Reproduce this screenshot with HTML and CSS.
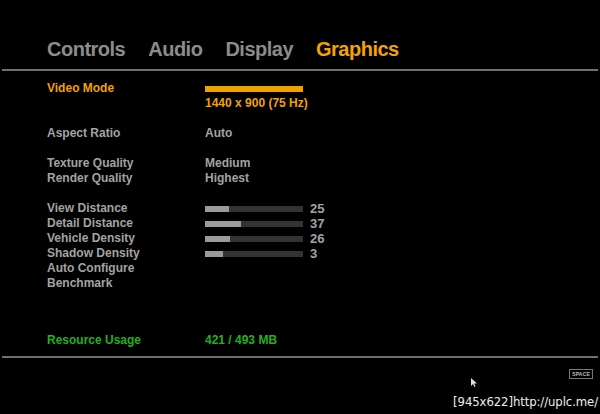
FILE: index.html
```html
<!DOCTYPE html>
<html lang="en">
<head>
<meta charset="UTF-8">
<title>Graphics Settings</title>
<link rel="stylesheet" href="styles.css">
</head>
<body>

<div class="tabs">
  <div class="tab">Controls</div>
  <div class="tab">Audio</div>
  <div class="tab">Display</div>
  <div class="tab active">Graphics</div>
</div>
<div class="divider"></div>

<div class="settings">
  <div class="group">
    <div class="row highlight">
      <span class="label">Video Mode</span>
      <span class="bar full"><span class="fill"></span></span>
    </div>
    <div class="row highlight">
      <span class="label"></span>
      <span class="value">1440 x 900 (75 Hz)</span>
    </div>
  </div>

  <div class="group">
    <div class="row">
      <span class="label">Aspect Ratio</span>
      <span class="value">Auto</span>
    </div>
  </div>

  <div class="group">
    <div class="row">
      <span class="label">Texture Quality</span>
      <span class="value">Medium</span>
    </div>
    <div class="row">
      <span class="label">Render Quality</span>
      <span class="value">Highest</span>
    </div>
  </div>

  <div class="group">
    <div class="row">
      <span class="label">View Distance</span>
      <span class="bar"><span class="fill" style="width:24px"></span></span>
      <span class="num">25</span>
    </div>
    <div class="row">
      <span class="label">Detail Distance</span>
      <span class="bar"><span class="fill" style="width:36px"></span></span>
      <span class="num">37</span>
    </div>
    <div class="row">
      <span class="label">Vehicle Density</span>
      <span class="bar"><span class="fill" style="width:25px"></span></span>
      <span class="num">26</span>
    </div>
    <div class="row">
      <span class="label">Shadow Density</span>
      <span class="bar"><span class="fill" style="width:18px"></span></span>
      <span class="num">3</span>
    </div>
    <div class="row">
      <span class="label">Auto Configure</span>
    </div>
    <div class="row">
      <span class="label">Benchmark</span>
    </div>
  </div>
</div>

<div class="usage">
  <div class="row green">
    <span class="label">Resource Usage</span>
    <span class="value">421 / 493 MB</span>
  </div>
</div>
<div class="divider bottom"></div>

<div class="footer">
  <span class="key">SPACE</span>
</div>

<svg class="cursor" width="7" height="9" viewBox="0 0 7 9">
  <path d="M0 0 L0 8 L2 6 L3.5 9 L4.5 8.5 L3.2 5.6 L6 5.6 Z" fill="#ddd"/>
</svg>
<div class="stamp">[945x622]http://uplc.me/</div>

</body>
</html>
```

FILE: styles.css
```css
body {
  margin: 0;
  width: 600px;
  height: 414px;
  background: #000;
  color: #999;
  font-family: "Liberation Sans", Arial, sans-serif;
  font-weight: bold;
  position: relative;
  overflow: hidden;
}

/* 탭 */
.tabs {
  display: flex;
  gap: 23px;
  padding: 37px 0 0 47px;
  height: 24px;
  line-height: 24px;
}
.tab {
  font-size: 20px;
  letter-spacing: -0.5px;
  color: #8c8c8c;
}
.tab.active { color: #f5a300; }

.divider {
  margin: 8px 2px 0 2px;
  height: 2px;
  background: #707070;
}
.divider.bottom { margin-top: 8px; }

/* 설정 목록 */
.settings {
  padding: 10px 0 0 47px;
}
.group + .group { margin-top: 15px; }
.row {
  display: flex;
  align-items: center;
  height: 15px;
  line-height: 15px;
  font-size: 12px;
  color: #a3a3a3;
}
.label { width: 158px; }
.row.highlight { color: #f2a200; }
.row.green { color: #22b022; }

.bar {
  width: 98px;
  height: 6px;
  background: #333;
  display: flex;
}
.bar .fill { background: #9a9a9a; height: 100%; }
.bar.full { background: #f2a200; height: 6px; }
.num { margin-left: 7px; font-size: 13px; }

.usage {
  padding: 42px 0 0 47px;
}

/* 하단 */
.footer {
  display: flex;
  justify-content: flex-end;
  padding: 11px 7px 0 0;
}
.key {
  font-size: 5px;
  line-height: 6px;
  padding: 1px 2px;
  border: 1px solid #777;
  color: #bbb;
  letter-spacing: 0.2px;
}

.cursor {
  position: absolute;
  left: 471px;
  top: 378px;
}
.stamp {
  position: absolute;
  right: 2px;
  top: 394px;
  font-family: "DejaVu Sans Condensed", "DejaVu Sans", sans-serif;
  font-weight: normal;
  font-size: 13px;
  letter-spacing: -0.1px;
  color: #eee;
}
```
